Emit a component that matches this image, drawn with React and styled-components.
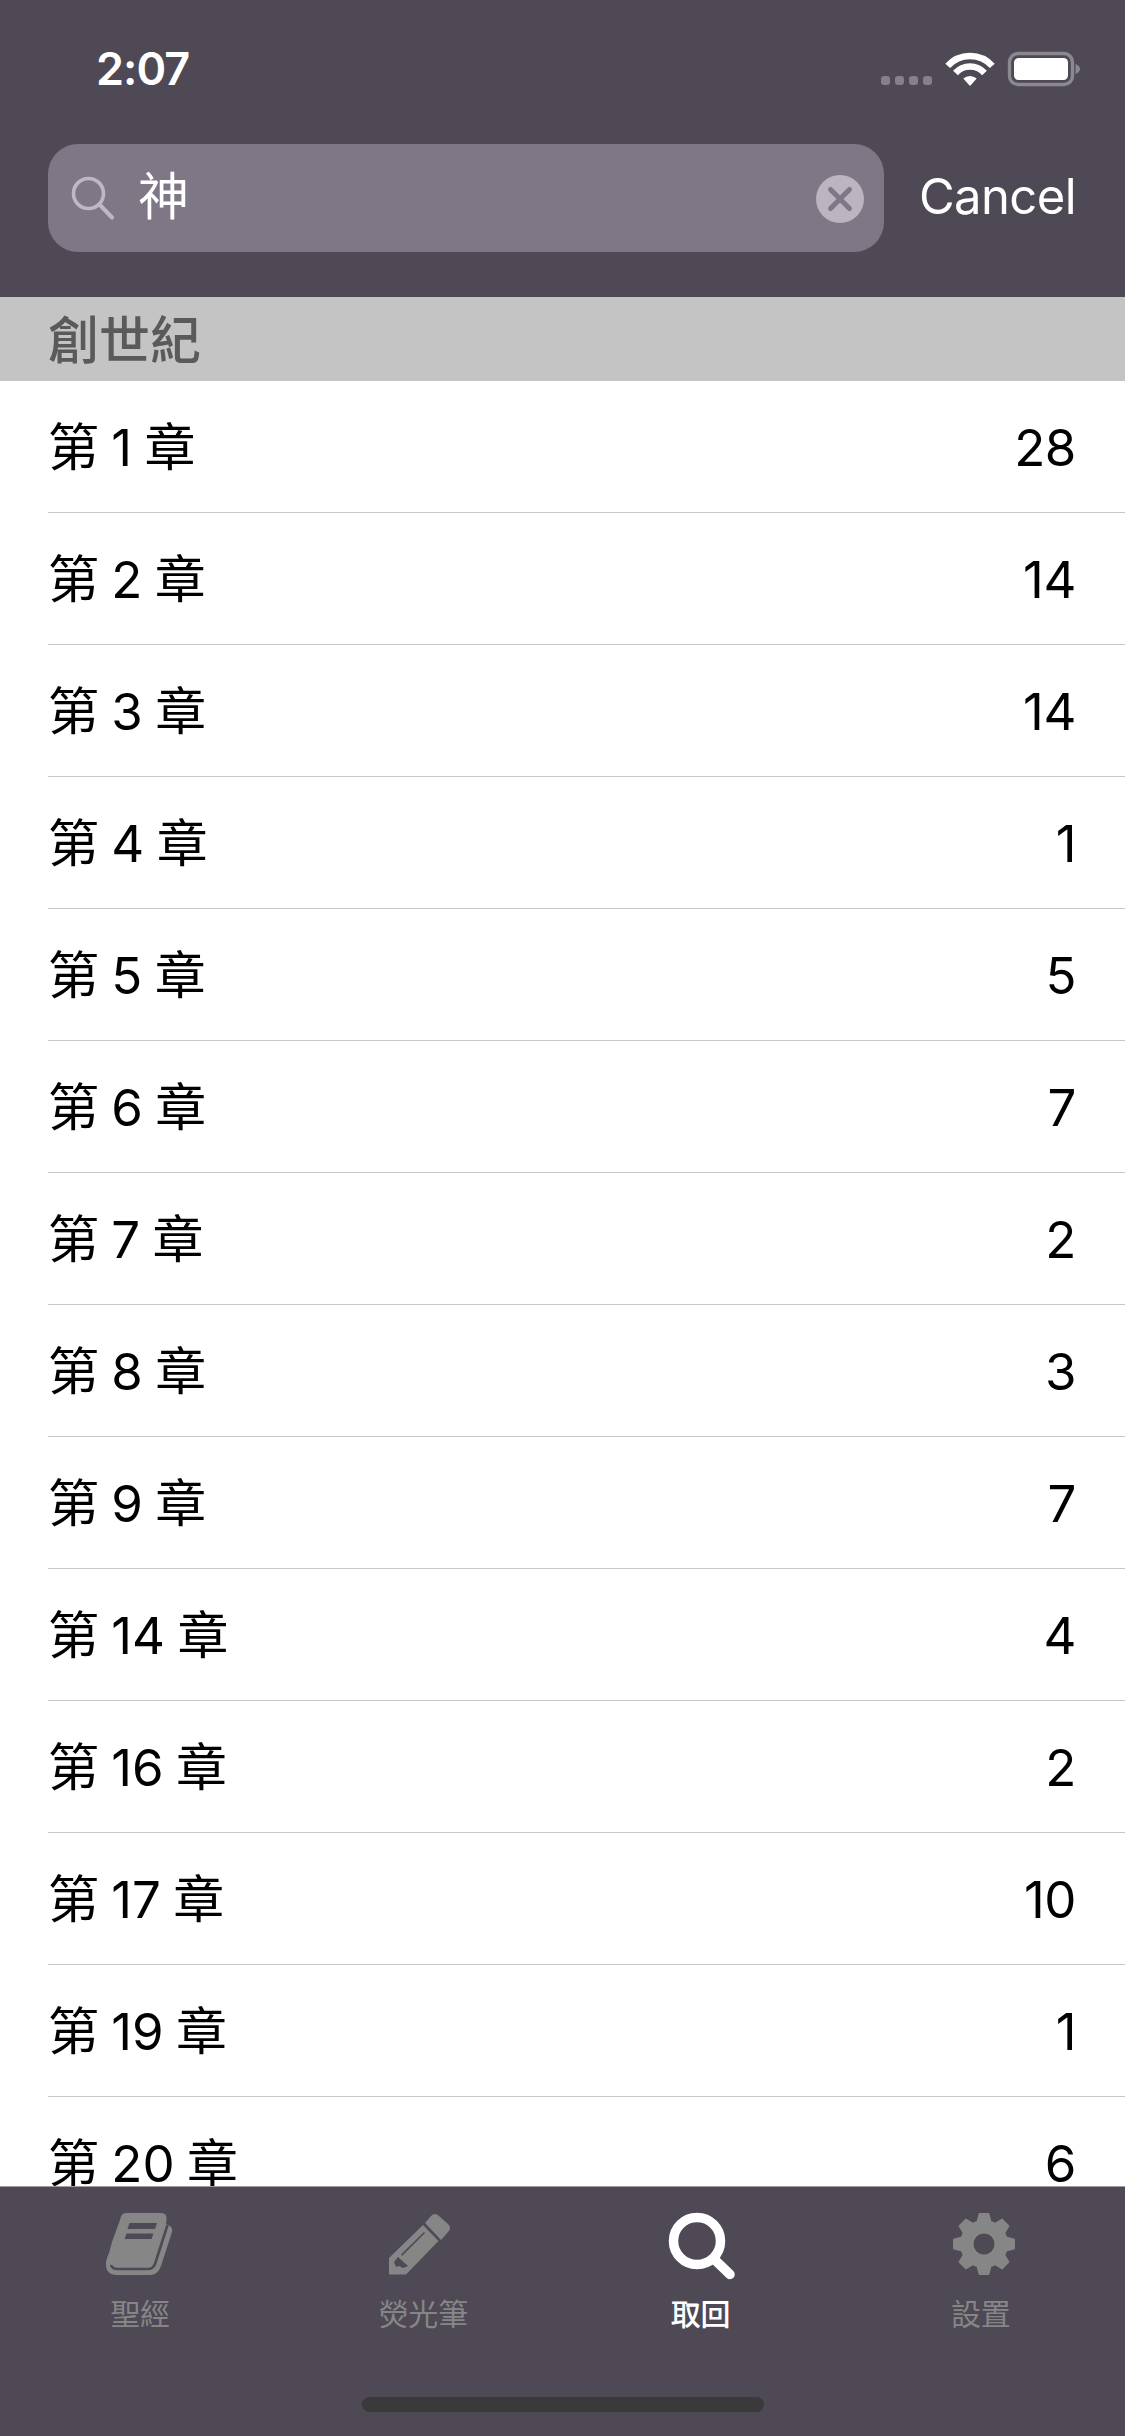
import React from "react";
import styled, { createGlobalStyle } from "styled-components";

const Global = createGlobalStyle`
  html, body { margin: 0; padding: 0; background: #fff; }
  * { box-sizing: border-box; }
`;

const FONT = `Inter, "Noto Sans CJK TC", "Noto Sans CJK SC", sans-serif`;
const CHROME = "#4e4955";
const GREY = "#868686";

const Screen = styled.div`
  width: 1125px;
  height: 2436px;
  display: flex;
  flex-direction: column;
  overflow: hidden;
  font-family: ${FONT};
  background: #fff;
`;
const Header = styled.header`
  height: 297px;
  flex: none;
  background: ${CHROME};
  display: flex;
  flex-direction: column;
`;
const StatusBar = styled.div`
  height: 144px;
  display: flex;
  align-items: flex-start;
  justify-content: space-between;
  padding: 42px 44px 0 96px;
`;
const Time = styled.span`
  color: #fff;
  font-size: 45px;
  line-height: 54px;
  font-weight: 600;
  letter-spacing: -1px;
`;
const StatusIcons = styled.svg`
  width: 200px;
  height: 50px;
  margin-top: 6px;
  display: block;
`;
const SearchRow = styled.div`
  display: flex;
  align-items: center;
  padding: 0 49px 0 48px;
  justify-content: space-between;
`;
const SearchField = styled.div`
  width: 836px;
  height: 108px;
  border-radius: 30px;
  background: #7f7786;
  display: flex;
  align-items: center;
  padding: 0 20px 0 22px;
`;
const SearchGlass = styled.svg`
  width: 46px;
  height: 48px;
  flex: none;
  display: block;
  margin-top: 2px;
`;
const Query = styled.span`
  flex: 1;
  color: #fff;
  font-size: 51px;
  line-height: 60px;
  margin-left: 22px;
  margin-top: -2px;
`;
const ClearIcon = styled.svg`
  width: 48px;
  height: 48px;
  flex: none;
  display: block;
  margin-top: 2px;
`;
const Cancel = styled.span`
  color: #fff;
  font-size: 49px;
  line-height: 60px;
  letter-spacing: -0.6px;
  margin-top: -2px;
`;
const List = styled.main`
  flex: 1;
  min-height: 0;
  overflow: hidden;
`;
const SectionHead = styled.div`
  height: 84px;
  background: #c4c4c4;
  color: #5a5a5a;
  font-size: 51px;
  font-weight: 500;
  line-height: 84px;
  padding: 2px 0 0 48px;
`;
const Row = styled.div`
  height: 132px;
  margin-left: 48px;
  padding: 2px 49px 0 0;
  display: flex;
  align-items: center;
  justify-content: space-between;
  border-bottom: 1px solid #c8c7cc;
  color: #000;
  font-size: 51px;
  line-height: 60px;
`;
const Chapter = styled.span`
  word-spacing: -2px;
`;
const Count = styled.span`
  letter-spacing: -0.4px;
`;
const TabBar = styled.nav`
  height: 250px;
  flex: none;
  background: ${CHROME};
  border-top: 1px solid #9f9ca3;
  display: flex;
  flex-direction: column;
  align-items: center;
`;
const Tabs = styled.div`
  height: 210px;
  width: 100%;
  display: grid;
  grid-template-columns: repeat(4, 1fr);
  padding-right: 4px;
`;
const Tab = styled.div`
  display: flex;
  flex-direction: column;
  align-items: center;
  padding-top: 13px;
  color: ${(p) => (p.$active ? "#fff" : GREY)};
  transform: translateX(${(p) => p.$nudge || 0}px);
`;
const TabIcon = styled.svg`
  width: 100px;
  height: 100px;
  display: block;
  fill: currentColor;
  overflow: visible;
`;
const TabLabel = styled.span`
  font-size: 30px;
  line-height: 36px;
  font-weight: ${(p) => (p.$active ? 500 : 400)};
  margin-top: -4px;
`;
const HomeBar = styled.div`
  width: 402px;
  height: 15px;
  border-radius: 8px;
  background: #3a3a3a;
`;

const BookGlyph = () => (
  <TabIcon viewBox="0 0 100 100">
    <path d="M36 13H71Q77 13 76.500 19L76 24L80 26Q83 28 82 32L71 66Q68 75 60 75H27Q15 75 16 62Q17 57 19 53L22 42L30 20Q31 13 36 13Z" />
    <path
      d="M21 65Q22 69 28 69H58Q63 69 65 64L77.500 25"
      fill="none"
      stroke={CHROME}
      strokeWidth="2.6"
    />
    <path d="M39.500 23H67L65 29H37.500ZM36.500 33.500H63.500L61.500 39H34.500Z" fill={CHROME} />
  </TabIcon>
);

const PencilGlyph = () => (
  <TabIcon viewBox="0 0 100 100">
    <path d="M52 23L58 16Q62 12 66 16L75 24Q79 28 75 32L68 40Z" />
    <path
      fillRule="evenodd"
      d="M50 25L65.500 41L33 74.500H16V58ZM28 54.500L51 32L52 33L29 56ZM21 62L25 57L35 66L30 68L26 66L23 67Z"
    />
  </TabIcon>
);

const SearchGlyph = () => (
  <TabIcon viewBox="0 0 100 100">
    <circle cx="46" cy="41" r="23.500" fill="none" stroke="currentColor" strokeWidth="9.500" />
    <path d="M64 60L79 74.500" fill="none" stroke="currentColor" strokeWidth="9.500" strokeLinecap="round" />
  </TabIcon>
);

const GEAR_TEETH = [0, 45, 90, 135, 180, 225, 270, 315];
const GearGlyph = () => (
  <TabIcon viewBox="0 0 100 100">
    <circle cx="53" cy="44" r="24" />
    {GEAR_TEETH.map((a) => (
      <path
        key={a}
        transform={`rotate(${a} 53 44)`}
        d="M47.500 14Q47.500 13 49 13H57Q58.500 13 58.500 14L61 24H45Z"
      />
    ))}
    <circle cx="53" cy="44" r="10.500" fill={CHROME} />
  </TabIcon>
);

const rows = [
  ["第 1 章", 28],
  ["第 2 章", 14],
  ["第 3 章", 14],
  ["第 4 章", 1],
  ["第 5 章", 5],
  ["第 6 章", 7],
  ["第 7 章", 2],
  ["第 8 章", 3],
  ["第 9 章", 7],
  ["第 14 章", 4],
  ["第 16 章", 2],
  ["第 17 章", 10],
  ["第 19 章", 1],
  ["第 20 章", 6],
];

const tabs = [
  { label: "聖經", Glyph: BookGlyph },
  { label: "熒光筆", Glyph: PencilGlyph, nudge: 3 },
  { label: "取回", Glyph: SearchGlyph, active: true },
  { label: "設置", Glyph: GearGlyph },
];

export default function App() {
  return (
    <Screen>
      <Global />
      <Header>
        <StatusBar>
          <Time>2:07</Time>
          <StatusIcons viewBox="0 0 200 50">
            <g fill="#85808b">
              <rect x="0" y="28" width="9" height="9" rx="3" />
              <rect x="14" y="28" width="9" height="9" rx="3" />
              <rect x="28" y="28" width="9" height="9" rx="3" />
              <rect x="42" y="28" width="9" height="9" rx="3" />
            </g>
            <path d="M66.700 17.900A30 30 0 0 1 111.300 17.900" fill="none" stroke="#fff" strokeWidth="6.500" />
            <path d="M74.500 25A19.500 19.500 0 0 1 103.500 25" fill="none" stroke="#fff" strokeWidth="6.500" />
            <path d="M89 38L82.300 30.500A10 10 0 0 1 95.700 30.500Z" fill="#fff" />
            <rect x="128.500" y="5.500" width="63" height="31" rx="8.500" fill="none" stroke="#8c8891" strokeWidth="3.400" />
            <rect x="133" y="10" width="54" height="22" rx="4.500" fill="#fff" />
            <path d="M194.500 16Q199 18 199 21Q199 24 194.500 26Z" fill="#8c8891" />
          </StatusIcons>
        </StatusBar>
        <SearchRow>
          <SearchField>
            <SearchGlass viewBox="0 0 46 48">
              <circle cx="18.500" cy="18.500" r="15" fill="none" stroke="#bdb8c3" strokeWidth="3.600" />
              <path d="M30 30L42 42.500" fill="none" stroke="#bdb8c3" strokeWidth="4" strokeLinecap="round" />
            </SearchGlass>
            <Query>神</Query>
            <ClearIcon viewBox="0 0 48 48">
              <circle cx="24" cy="24" r="24" fill="#bab5c1" />
              <path d="M14.500 14.500L33.500 33.500M33.500 14.500L14.500 33.500" stroke="#7f7786" strokeWidth="5" strokeLinecap="round" />
            </ClearIcon>
          </SearchField>
          <Cancel>Cancel</Cancel>
        </SearchRow>
      </Header>
      <List>
        <SectionHead>創世紀</SectionHead>
        {rows.map(([label, n]) => (
          <Row key={label}>
            <Chapter>{label}</Chapter>
            <Count>{n}</Count>
          </Row>
        ))}
      </List>
      <TabBar>
        <Tabs>
          {tabs.map(({ label, Glyph, active, nudge }) => (
            <Tab key={label} $active={active} $nudge={nudge}>
              <Glyph />
              <TabLabel $active={active}>{label}</TabLabel>
            </Tab>
          ))}
        </Tabs>
        <HomeBar />
      </TabBar>
    </Screen>
  );
}
